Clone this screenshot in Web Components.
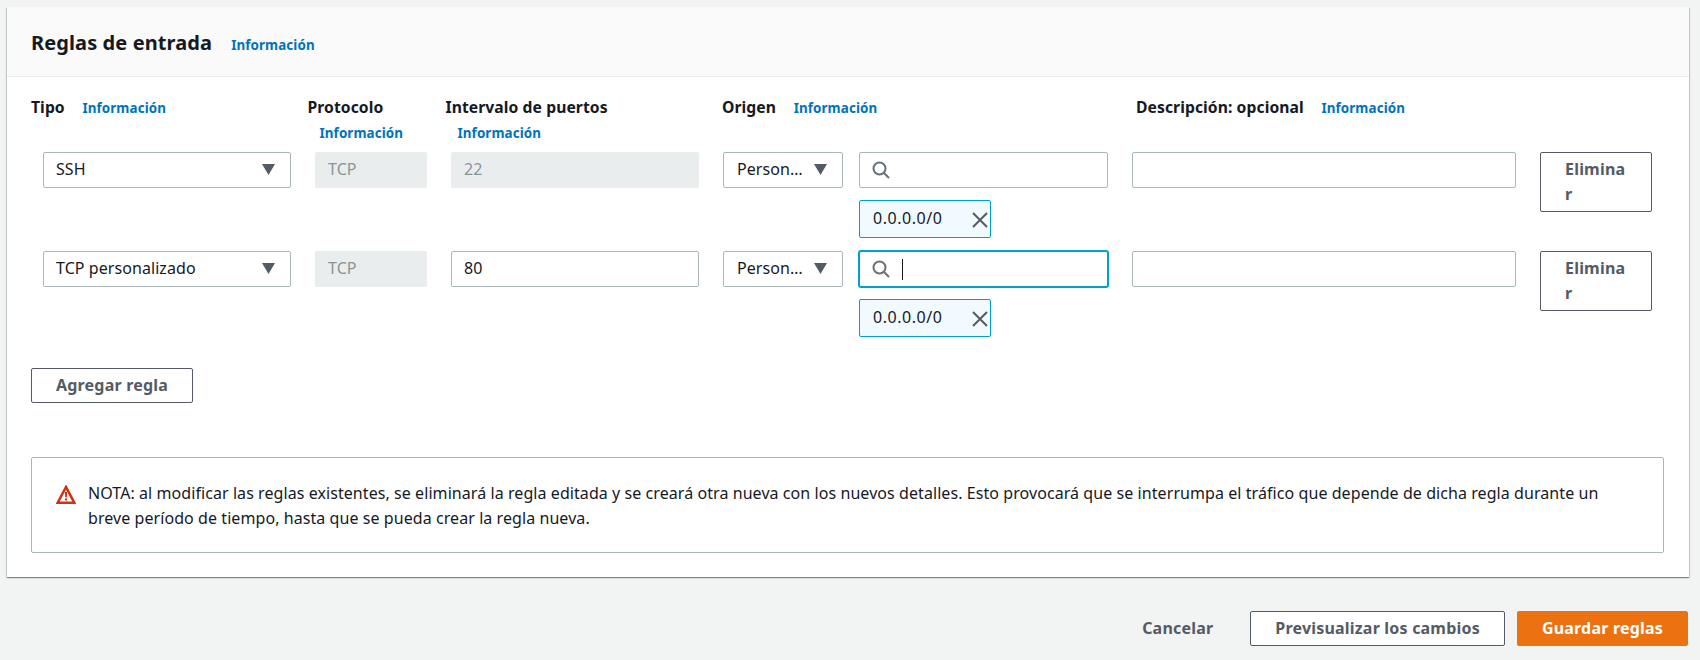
<!doctype html>
<html lang="es">
<head>
<meta charset="utf-8">
<title>Reglas de entrada</title>
<style>
  html, body { margin: 0; height: 100%; }
  body {
    background: #f2f3f3;
    color: #16191f;
    font: 400 16px/24.5px "Noto Sans", "Open Sans", sans-serif;
    letter-spacing: .07px;
  }
  rule-row + rule-row { margin-top: 13px; }
  rule-head b { word-spacing: 0; }
</style>
</head>
<body>
<rules-page>
  <rule-panel heading="Reglas de entrada">
    <rule-head>
      <span><b>Tipo</b> <info-link></info-link></span>
      <span><b>Protocolo</b> <info-link></info-link></span>
      <span style="display:block;max-width:240px"><b>Intervalo de puertos</b> <info-link></info-link></span>
      <span><b>Origen</b> <info-link></info-link></span>
      <span><b>Descripción: opcional</b> <info-link></info-link></span>
    </rule-head>
    <rule-row>
      <rule-select>SSH</rule-select>
      <rule-field disabled>TCP</rule-field>
      <rule-field disabled>22</rule-field>
      <rule-source></rule-source>
      <rule-field></rule-field>
      <aws-button>Eliminar</aws-button>
    </rule-row>
    <rule-row>
      <rule-select>TCP personalizado</rule-select>
      <rule-field disabled>TCP</rule-field>
      <rule-field>80</rule-field>
      <rule-source focused></rule-source>
      <rule-field></rule-field>
      <aws-button>Eliminar</aws-button>
    </rule-row>
    <aws-button id="add" style="margin-top:31px;width:max-content">Agregar regla</aws-button>
    <note-alert>NOTA: al modificar las reglas existentes, se eliminará la regla editada y se creará otra nueva con los nuevos detalles. Esto provocará que se interrumpa el tráfico que depende de dicha regla durante un breve período de tiempo, hasta que se pueda crear la regla nueva.</note-alert>
  </rule-panel>
  <page-actions>
    <aws-button variant="link">Cancelar</aws-button>
    <aws-button>Previsualizar los cambios</aws-button>
    <aws-button variant="primary">Guardar reglas</aws-button>
  </page-actions>
</rules-page>

<script>
(function initRulesPage() {
  const BOLD = `font-weight: 700; letter-spacing: .2px;`;

  class RulesPage extends HTMLElement {
    constructor() {
      super();
      this.attachShadow({ mode: "open" });
      this.shadowRoot.innerHTML = `<style>
        :host { display: block; padding: 7px 11px 0 7px; }
      </style><slot></slot>`;
    }
  }

  class RulePanel extends HTMLElement {
    constructor() {
      super();
      this.attachShadow({ mode: "open" });
      this.shadowRoot.innerHTML = `<style>
        :host {
          display: block;
          background: #fff;
          box-shadow: 0 1px 1px 0 rgba(0, 28, 36, .3), 1px 1px 1px 0 rgba(0, 28, 36, .15), -1px 1px 1px 0 rgba(0, 28, 36, .15);
        }
        header {
          height: 70px;
          box-sizing: border-box;
          background: #fafafa;
          border-bottom: 1px solid #eaeded;
          padding-left: 24px;
          display: flex;
          align-items: center;
          gap: 19px;
        }
        h2 { margin: 2px 0 0; font-size: 20px; font-weight: 700; letter-spacing: .1px; line-height: 28px; }
        info-link { margin: 7px 0 0; }
        .body { padding: 18px 25px 24px 24px; display: flex; flex-direction: column; }
      </style>
      <header><h2>${this.getAttribute("heading")}</h2><info-link></info-link></header>
      <div class="body"><slot></slot></div>`;
    }
  }

  class InfoLink extends HTMLElement {
    constructor() {
      super();
      this.attachShadow({ mode: "open" });
      this.shadowRoot.innerHTML = `<style>
        :host {
          display: inline-block;
          margin-left: 12px;
          color: #0073bb;
          font-size: 13.4px;
          font-weight: 700;
          letter-spacing: .1px;
        }
      </style>Información`;
    }
  }

  class RuleHead extends HTMLElement {
    constructor() {
      super();
      this.attachShadow({ mode: "open" });
      this.shadowRoot.innerHTML = `<style>
        :host {
          display: grid;
          grid-template-columns: 276.5px 138px 276.5px 414px 1fr;
          margin-bottom: 7px;
          line-height: 25px;
          height: 50px;
          font-size: 15.7px;
          word-spacing: 1.5px;
        }
      </style><slot></slot>`;
    }
  }

  class RuleRow extends HTMLElement {
    constructor() {
      super();
      this.attachShadow({ mode: "open" });
      this.shadowRoot.innerHTML = `<style>
        :host {
          display: grid;
          grid-template-columns: 248px 112px 248px 385px 384px 112px;
          column-gap: 24px;
          align-items: start;
          margin-left: 12px;
        }
      </style><slot></slot>`;
    }
  }

  const BOX = `
    box-sizing: border-box;
    height: 36px;
    border: 1px solid #aab7b8;
    border-radius: 2px;
    background: #fff;
    line-height: 33px;
  `;

  class RuleSelect extends HTMLElement {
    constructor() {
      super();
      this.attachShadow({ mode: "open" });
      this.shadowRoot.innerHTML = `<style>
        :host {
          ${BOX}
          display: flex;
          align-items: center;
          justify-content: space-between;
          padding: 0 15px 1px 12px;
          white-space: nowrap;
        }
        svg { display: block; flex: none; margin-top: -1px; }
      </style>
      <slot></slot>
      <svg width="13" height="11" viewBox="0 0 13 11"><path d="M0 0h13L6.5 11z" fill="#545b64"/></svg>`;
    }
  }

  class RuleField extends HTMLElement {
    constructor() {
      super();
      this.attachShadow({ mode: "open" });
      this.shadowRoot.innerHTML = `<style>
        :host {
          ${BOX}
          display: block;
          padding: 0 12px;
        }
        :host([disabled]) {
          background: #eaeded;
          border-color: #eaeded;
          color: #879596;
        }
      </style><slot></slot>`;
    }
  }

  class RuleSource extends HTMLElement {
    constructor() {
      super();
      this.attachShadow({ mode: "open" });
      const focused = this.hasAttribute("focused");
      this.shadowRoot.innerHTML = `<style>
        :host {
          display: grid;
          grid-template-columns: 120px 249px;
          column-gap: 16px;
          row-gap: 12px;
        }
        rule-select { padding-left: 13px; }
        .search {
          ${BOX}
          display: flex;
          align-items: center;
          padding-left: 12px;
        }
        .search.focus {
          border-color: #00a1c9;
          box-shadow: 0 0 0 1px #00a1c9;
        }
        .caret { width: 1px; height: 21px; margin-left: 12px; background: #16191f; }
        rule-token { grid-column: 2; }
      </style>
      <rule-select>Person…</rule-select>
      <div class="search ${focused ? "focus" : ""}">
        <svg width="18" height="18" viewBox="0 0 18 18" fill="none" stroke="#687078" stroke-width="2"><circle cx="7.5" cy="7.5" r="6"/><path d="M11.8 11.8 17 17"/></svg>
        ${focused ? `<span class="caret"></span>` : ""}
      </div>
      <rule-token>0.0.0.0/0</rule-token>`;
    }
  }

  class RuleToken extends HTMLElement {
    constructor() {
      super();
      this.attachShadow({ mode: "open" });
      this.shadowRoot.innerHTML = `<style>
        :host {
          box-sizing: border-box;
          width: 132px;
          height: 38px;
          display: flex;
          align-items: center;
          justify-content: space-between;
          padding: 0 2px 2px 13px;
          border: 1px solid #00a1c9;
          border-radius: 2px;
          background: #f1faff;
          letter-spacing: .55px;
        }
        svg { display: block; margin-top: 3px; }
      </style>
      <slot></slot>
      <svg width="16" height="16" viewBox="0 0 16 16" fill="none" stroke="#545b64" stroke-width="2"><path d="M1 1l14 14M15 1 1 15"/></svg>`;
    }
  }

  class AwsButton extends HTMLElement {
    constructor() {
      super();
      this.attachShadow({ mode: "open" });
      this.shadowRoot.innerHTML = `<style>
        :host {
          display: block;
          box-sizing: border-box;
          min-height: 35px;
          padding: 4px 24px;
          border: 1px solid #545b64;
          border-radius: 2px;
          background: #fff;
          color: #545b64;
          line-height: 25px;
          word-break: break-all;
          ${BOLD}
        }
        :host([variant="link"]) { background: transparent; border-color: transparent; }
        :host([variant="primary"]) { background: #ec7211; border-color: #ec7211; color: #fff; }
      </style><slot></slot>`;
    }
  }

  class NoteAlert extends HTMLElement {
    constructor() {
      super();
      this.attachShadow({ mode: "open" });
      this.shadowRoot.innerHTML = `<style>
        :host {
          display: flex;
          gap: 12px;
          box-sizing: border-box;
          height: 96px;
          margin-top: 54px;
          padding: 23px 24px 0 24px;
          border: 1px solid #aab7b8;
          border-radius: 2px;
        }
        svg { flex: none; display: block; margin-top: 4px; }
      </style>
      <svg width="20" height="19" viewBox="0 0 20 19">
        <path d="M10 2 1.7 17.7h16.6z" fill="none" stroke="#d13212" stroke-width="2.6"/>
        <path d="M8.9 7h2.2l-.3 5.4H9.2z M8.9 13.4h2.2v2.1H8.9z" fill="#d13212"/>
      </svg>
      <div><slot></slot></div>`;
    }
  }

  class PageActions extends HTMLElement {
    constructor() {
      super();
      this.attachShadow({ mode: "open" });
      this.shadowRoot.innerHTML = `<style>
        :host {
          display: flex;
          justify-content: flex-end;
          gap: 12px;
          margin: 34px 1px 0 0;
        }
      </style><slot></slot>`;
    }
  }

  customElements.define("rules-page", RulesPage);
  customElements.define("rule-panel", RulePanel);
  customElements.define("info-link", InfoLink);
  customElements.define("rule-head", RuleHead);
  customElements.define("rule-row", RuleRow);
  customElements.define("rule-select", RuleSelect);
  customElements.define("rule-field", RuleField);
  customElements.define("rule-token", RuleToken);
  customElements.define("rule-source", RuleSource);
  customElements.define("aws-button", AwsButton);
  customElements.define("note-alert", NoteAlert);
  customElements.define("page-actions", PageActions);
})();
</script>
</body>
</html>
